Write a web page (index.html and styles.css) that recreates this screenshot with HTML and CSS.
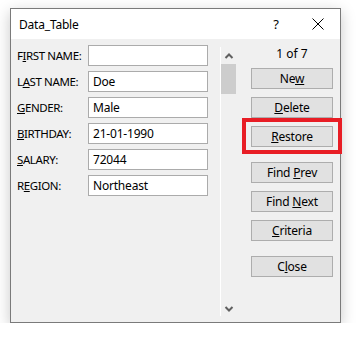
FILE: index.html
```html
<!DOCTYPE html>
<html lang="en">
<head>
  <meta charset="UTF-8" />
  <title>Data_Table</title>
  <link rel="stylesheet" href="styles.css">
</head>
<body>
  <div class="dialog">
    <div class="titlebar">
      <span class="title">Data_Table</span>
      <span class="help">?</span>
      <svg class="close" width="12" height="12" viewBox="0 0 12 12">
        <path d="M0.5 0.5 L11.5 11.5 M11.5 0.5 L0.5 11.5" stroke="#000" stroke-width="1" fill="none"/>
      </svg>
    </div>

    <div class="content">
      <div class="fields">
        <div class="row"><span class="label">F<u>I</u>RST NAME:</span><div class="input"></div></div>
        <div class="row"><span class="label">L<u>A</u>ST NAME:</span><div class="input">Doe</div></div>
        <div class="row"><span class="label"><u>G</u>ENDER:</span><div class="input">Male</div></div>
        <div class="row"><span class="label"><u>B</u>IRTHDAY:</span><div class="input">21-01-1990</div></div>
        <div class="row"><span class="label"><u>S</u>ALARY:</span><div class="input">72044</div></div>
        <div class="row"><span class="label">R<u>E</u>GION:</span><div class="input">Northeast</div></div>
      </div>

      <div class="scrollbar">
        <svg class="arrow" width="16" height="17" viewBox="0 0 16 17">
          <path d="M4.5 11 L8 7.5 L11.5 11" stroke="#606060" stroke-width="2" fill="none"/>
        </svg>
        <div class="thumb"></div>
        <div class="track"></div>
        <svg class="arrow" width="16" height="17" viewBox="0 0 16 17">
          <path d="M4.5 8 L8 11.5 L11.5 8" stroke="#606060" stroke-width="2" fill="none"/>
        </svg>
      </div>

      <div class="actions">
        <div class="counter">1 of 7</div>
        <button class="btn">Ne<u>w</u></button>
        <button class="btn"><u>D</u>elete</button>
        <div class="highlight">
          <button class="btn"><u>R</u>estore</button>
        </div>
        <button class="btn spaced">Find <u>P</u>rev</button>
        <button class="btn">Find <u>N</u>ext</button>
        <button class="btn"><u>C</u>riteria</button>
        <button class="btn spaced">C<u>l</u>ose</button>
      </div>
    </div>
  </div>
</body>
</html>
```

FILE: styles.css
```css
body {
  margin: 0;
  background: #fff;
  font-family: 'Noto Sans', 'Open Sans', sans-serif;
  font-size: 12px;
  color: #000;
}

.dialog {
  margin: 8px 0 0 10px;
  width: 329px;
  height: 313px;
  border: 1px solid #7a7a7a;
  background: #f0f0f0;
  box-shadow: 0 4px 14px rgba(0,0,0,0.22);
  display: flex;
  flex-direction: column;
}

.titlebar {
  height: 30px;
  background: #fff;
  display: flex;
  align-items: center;
  padding-left: 8px;
}

.title {
  flex: 1;
  font-size: 12px;
  letter-spacing: -0.2px;
}

.help {
  font-size: 13px;
  margin-right: 33px;
}

.close {
  margin-right: 16px;
}

.content {
  flex: 1;
  display: flex;
}

.fields {
  padding: 6px 0 0 6px;
  display: flex;
  flex-direction: column;
  gap: 5px;
}

.row {
  display: flex;
  align-items: center;
  height: 21px;
}

.label {
  width: 71px;
  white-space: nowrap;
  font-size: 11.5px;
  letter-spacing: -0.4px;
}

.input {
  width: 120px;
  height: 21px;
  box-sizing: border-box;
  border: 1px solid #ababab;
  background: #fff;
  padding-left: 4px;
  line-height: 19px;
  letter-spacing: -0.2px;
}

.scrollbar {
  width: 16px;
  margin: 8px 0 6px 12px;
  border-left: 1px solid #fff;
  display: flex;
  flex-direction: column;
}

.thumb {
  width: 15px;
  height: 30px;
  background: #cdcdcd;
}

.track {
  flex: 1;
}

.actions {
  margin-left: 14px;
  width: 82px;
  padding-top: 6px;
  display: flex;
  flex-direction: column;
  gap: 8px;
}

.counter {
  height: 17px;
  line-height: 17px;
  text-align: center;
  margin-bottom: -2px;
}

.btn {
  width: 82px;
  height: 21px;
  box-sizing: border-box;
  border: 1px solid #adadad;
  background: #e1e1e1;
  font-family: inherit;
  font-size: 12px;
  letter-spacing: -0.2px;
  color: #000;
  padding: 0;
  display: block;
}

.spaced {
  margin-top: 7px;
}

.highlight {
  position: relative;
}

.highlight::after {
  content: "";
  position: absolute;
  top: -8px;
  left: -9px;
  right: -9px;
  bottom: -7px;
  border: 4px solid #e81d25;
}
```
